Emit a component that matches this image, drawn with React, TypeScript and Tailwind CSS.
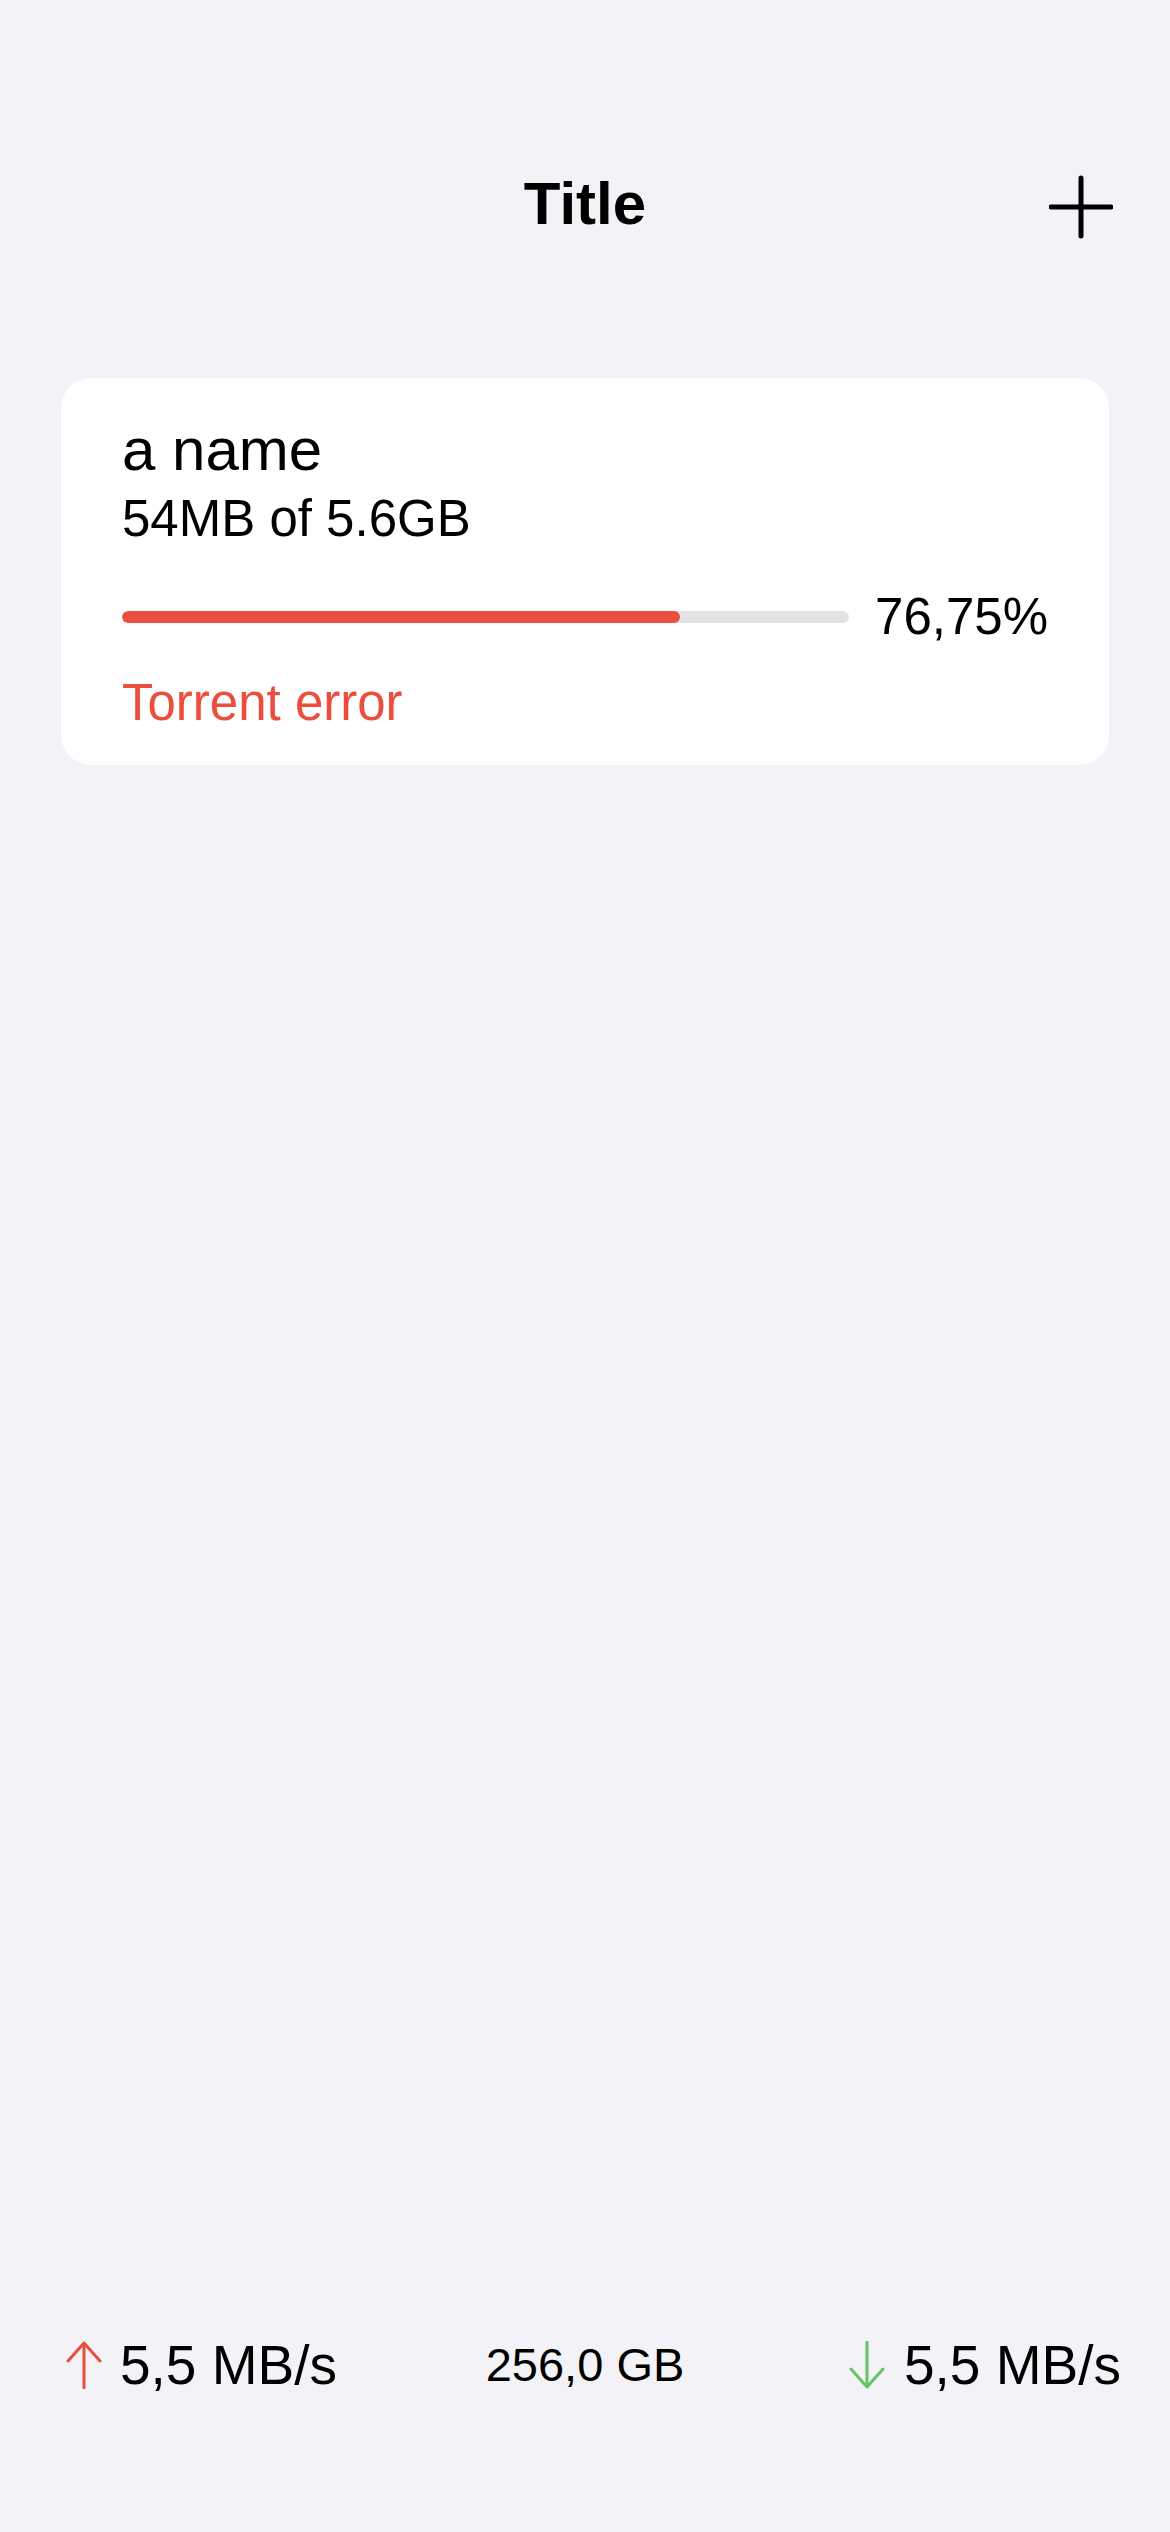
import React from 'react';

const torrent = {
  name: 'a name',
  size: '54MB of 5.6GB',
  progress: 76.75,
  error: 'Torrent error',
};

function PlusIcon() {
  return (
    <svg width="64" height="64" viewBox="0 0 64 64" fill="none">
      <path d="M32 3v58M2 32h60" stroke="#000" strokeWidth="5" strokeLinecap="round" />
    </svg>
  );
}

function ArrowUp() {
  return (
    <svg width="36" height="48" viewBox="0 0 36 48" fill="none">
      <path d="M18 2v45M2 20L18 2l16 18" stroke="#EB4E3D" strokeWidth="3" strokeLinecap="round" strokeLinejoin="round" />
    </svg>
  );
}

function ArrowDown() {
  return (
    <svg width="38" height="48" viewBox="0 0 38 48" fill="none">
      <path d="M19 1v45M3 28l16 18 16-18" stroke="#65C466" strokeWidth="3" strokeLinecap="round" strokeLinejoin="round" />
    </svg>
  );
}

export default function App() {
  return (
    <div
      className="min-h-[2532px] bg-[#F2F2F7] text-black flex flex-col"
      style={{ fontFamily: '"Liberation Sans", Arial, sans-serif' }}
    >
      {/* Nav bar */}
      <header className="grid grid-cols-3 items-center pt-[168px]">
        <div />
        <h1 className="text-center text-[60px] leading-[72px] font-bold">Title</h1>
        <div className="flex justify-end pr-[57px]">
          <button className="w-[64px] h-[64px] flex items-center justify-center mt-[6px]">
            <PlusIcon />
          </button>
        </div>
      </header>

      {/* List */}
      <main className="flex-1 px-[61px] pt-[138px]">
        <div className="bg-white rounded-[30px] pl-[61px] pr-[61px] pt-[36px] pb-[32px]">
          <div className="text-[60px] leading-[72px]">{torrent.name}</div>
          <div className="text-[51px] leading-[60px] mt-[3px]">{torrent.size}</div>
          <div className="flex items-center gap-[26px] mt-[38px]">
            <div className="flex-1 h-[12px] rounded-full bg-[#E3E3E5] overflow-hidden">
              <div className="h-full rounded-full bg-[#EB4E3D]" style={{ width: `${torrent.progress}%` }} />
            </div>
            <span className="text-[51px] leading-[60px]">76,75%</span>
          </div>
          <div className="text-[51px] leading-[60px] mt-[26px] text-[#EB4E3D]">{torrent.error}</div>
        </div>
      </main>

      {/* Status bar */}
      <footer className="grid grid-cols-3 items-center pb-[134px]">
        <div className="flex items-center gap-[18px] pl-[66px]">
          <ArrowUp />
          <span className="text-[55px] leading-[66px]">5,5 MB/s</span>
        </div>
        <div className="text-center text-[47px] leading-[66px]">256,0 GB</div>
        <div className="flex items-center justify-end gap-[18px] pr-[49px]">
          <ArrowDown />
          <span className="text-[55px] leading-[66px]">5,5 MB/s</span>
        </div>
      </footer>
    </div>
  );
}
